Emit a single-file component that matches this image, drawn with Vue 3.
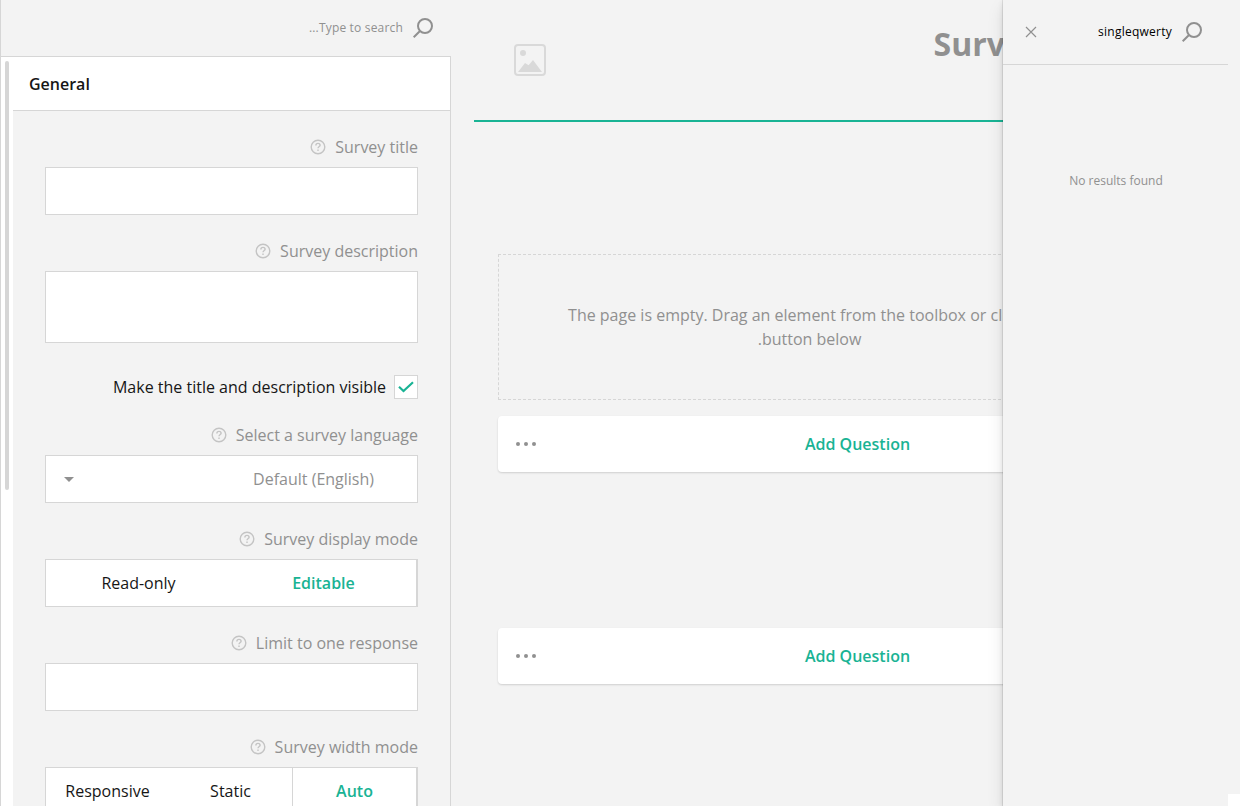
<script setup>
const fields = [
  { label: 'Survey title', type: 'input' },
  { label: 'Survey description', type: 'area' },
  { label: 'Make the title and description visible', type: 'check' },
  { label: 'Select a survey language', type: 'select', value: 'Default (English)' },
  { label: 'Survey display mode', type: 'group', options: ['Read-only', 'Editable'], active: 'Editable' },
  { label: 'Limit to one response', type: 'input' },
  { label: 'Survey width mode', type: 'group', options: ['Responsive', 'Static', 'Auto'], active: 'Auto', split: true }
]
</script>

<template>
  <div class="app">
    <aside class="sidebar">
      <header class="side-search">
        <span class="hint" dir="rtl">Type to search...</span>
        <svg class="loupe" width="24" height="24" viewBox="0 0 24 24">
          <circle cx="14" cy="10" r="7" />
          <path d="M9 15L2.7 21.3" />
        </svg>
      </header>
      <div class="side-main">
        <div class="track"><div class="thumb"></div></div>
        <div class="props">
          <h3 class="category">General</h3>
          <div class="fields">
            <section v-for="f in fields" :key="f.label" :class="['field', f.type]">
              <template v-if="f.type === 'check'">
                <span>{{ f.label }}</span>
                <span class="box">
                  <svg width="22" height="22" viewBox="0 0 22 22"><path d="M4 10.8L8.5 15L18 6.3" /></svg>
                </span>
              </template>
              <template v-else>
                <div class="label">
                  <svg class="help" width="16" height="16" viewBox="0 0 16 16">
                    <circle cx="8" cy="8" r="6.8" />
                    <path d="M5.9 6.4C5.9 5 6.8 4.4 8 4.4S10.1 5.1 10.1 6.2C10.1 7.5 8 7.5 8 9.3M8 10.5V11.9" />
                  </svg>
                  <span>{{ f.label }}</span>
                </div>
                <div v-if="f.type === 'group'" :class="['control', 'options', { split: f.split }]">
                  <span v-for="o in f.options" :key="o" :class="['option', { active: o === f.active }]">{{ o }}</span>
                </div>
                <div v-else class="control">
                  <template v-if="f.value">
                    <svg width="10" height="5" viewBox="0 0 10 5"><path d="M0 0H10L5 5Z" fill="#909090" /></svg>
                    <span>{{ f.value }}</span>
                  </template>
                </div>
              </template>
            </section>
          </div>
        </div>
      </div>
    </aside>

    <main class="design">
      <header class="survey-head">
        <svg class="logo" width="32" height="32" viewBox="0 0 32 32">
          <rect x="1" y="1" width="30" height="30" rx="3" fill="none" stroke="#d9d9d9" stroke-width="2" />
          <circle cx="9" cy="9" r="3" fill="#d9d9d9" />
          <path d="M4 28L11 19L14.6 21.2L19 16L28 28Z" fill="#d9d9d9" />
        </svg>
        <h1>Survey Title</h1>
      </header>
      <div class="page">
        <div class="empty" dir="rtl">
          The page is empty. Drag an element from the toolbox or click the<br />button below.
        </div>
        <div v-for="n in 2" :key="n" class="add">
          <svg width="20" height="4" viewBox="0 0 20 4" fill="#909090">
            <circle cx="2" cy="2" r="2" /><circle cx="10" cy="2" r="2" /><circle cx="18" cy="2" r="2" />
          </svg>
          <span>Add Question</span>
        </div>
      </div>
    </main>

    <aside class="drawer">
      <header class="drawer-head">
        <svg class="close" width="12" height="12" viewBox="0 0 12 12"><path d="M1 1L11 11M11 1L1 11" /></svg>
        <span class="query">singleqwerty</span>
        <svg class="loupe" width="24" height="24" viewBox="0 0 24 24">
          <circle cx="14" cy="10" r="7" />
          <path d="M9 15L2.7 21.3" />
        </svg>
      </header>
      <p class="none">No results found</p>
      <div class="corner"></div>
    </aside>
  </div>
</template>

<style>
body { margin: 0; overflow: hidden; background: #f3f3f3; }
</style>

<style scoped>
* { box-sizing: border-box; }
.app {
  position: relative; display: flex; width: 1240px; height: 806px; overflow: hidden;
  background: #f3f3f3; font: 16px/24px "Open Sans", sans-serif; color: #909090;
}
.sidebar { width: 451px; flex: none; display: flex; flex-direction: column; border-left: 1px solid #d6d6d6; }
.side-search { height: 56px; flex: none; display: flex; align-items: center; justify-content: flex-end; gap: 8px; padding-right: 16px; }
.hint { font-size: 12px; line-height: 16px; letter-spacing: .18px; }
.loupe { fill: none; stroke: #909090; stroke-width: 2; flex: none; }
.side-main { flex: 1; min-height: 0; display: flex; border-top: 1px solid #d6d6d6; border-right: 1px solid #d6d6d6; overflow: hidden; }
.track { width: 12px; flex: none; background: #fff; padding: 4px; }
.thumb { width: 4px; height: 429px; border-radius: 2px; background: #d6d6d6; }
.props { flex: 1; }
.category { margin: 0; height: 54px; padding: 15px 16px; background: #fff; border-bottom: 1px solid #d6d6d6; font-size: 16px; line-height: 24px; font-weight: 600; color: #161616; }
.fields { padding: 24px 32px 0; display: flex; flex-direction: column; gap: 24px; }
.label { display: flex; justify-content: flex-end; align-items: center; gap: 9px; margin-bottom: 8px; }
.help { fill: none; stroke: #c4c4c4; stroke-width: 1.4; }
.control { height: 48px; background: #fff; border: 1px solid #d6d6d6; }
.area .control { height: 72px; }
.check { margin-top: 8px; height: 24px; display: flex; justify-content: flex-end; gap: 8px; color: #161616; }
.box { width: 24px; height: 24px; background: #fff; border: 1px solid #d6d6d6; }
.box svg { display: block; fill: none; stroke: #19b394; stroke-width: 2.2; }
.select .control { display: flex; align-items: center; justify-content: space-between; padding: 0 43px 0 18px; }
.options { display: flex; border-right-width: 2px; }
.option { flex: 1 1 0; text-align: center; line-height: 46px; color: #161616; }
.option.active { color: #19b394; font-weight: 600; }
.split .active { border-left: 1px solid #d6d6d6; }
.design { width: 789px; flex: none; padding-left: 23px; overflow: hidden; }
.survey-head { height: 122px; display: flex; align-items: flex-start; padding-left: 40px; border-bottom: 2px solid #19b394; }
.logo { margin-top: 44px; flex: none; }
h1 { width: 75px; overflow: hidden; margin: 24px 0 0 387.5px; font-size: 32px; line-height: 40px; font-weight: 700; white-space: nowrap; }
.page { padding: 132px 0 0 24px; }
.empty { width: 623px; height: 146px; margin-bottom: 16px; padding-top: 48px; border: 1px dashed #d6d6d6; text-align: center; }
.add { width: 719px; height: 56px; margin-bottom: 156px; display: flex; align-items: center; padding-left: 18px; background: #fff; border-radius: 4px; box-shadow: 0 1px 2px rgba(0, 0, 0, .15); color: #19b394; font-weight: 600; }
.add span { flex: 1; text-align: center; padding-right: 38px; }
.drawer { position: absolute; top: 0; right: 0; width: 237px; height: 806px; background: #f3f3f3; box-shadow: 0 8px 16px rgba(0, 0, 0, .1), 0 2px 6px rgba(0, 0, 0, .1), 0 0 1px rgba(0, 0, 0, .5); }
.drawer-head { width: 225px; height: 65px; display: flex; align-items: center; padding: 0 24px 1px 22px; border-bottom: 1px solid #d6d6d6; }
.close { fill: none; stroke: #909090; stroke-width: 1.2; }
.query { margin-left: auto; margin-right: 8px; font-size: 12px; line-height: 16px; letter-spacing: .25px; color: #000; }
.none { width: 226px; margin: 108px 0 0; text-align: center; font-size: 12px; line-height: 16px; }
.corner { position: absolute; right: 0; bottom: 0; width: 12px; height: 12px; background: #fff; }
</style>
